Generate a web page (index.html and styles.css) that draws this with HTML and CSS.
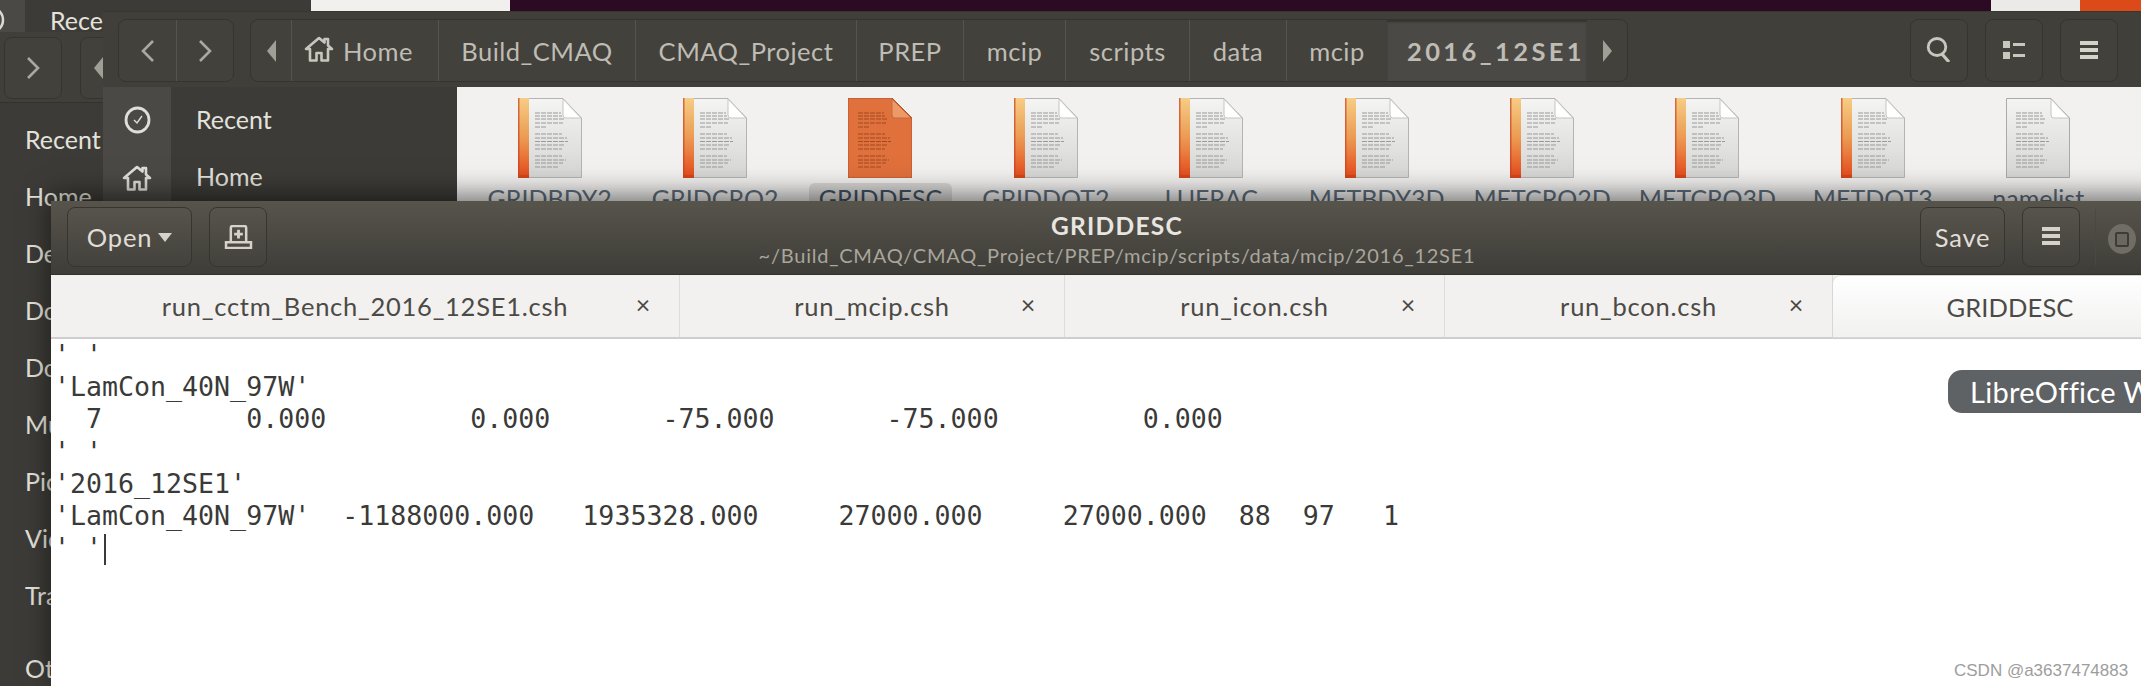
FILE: index.html
```html
<!DOCTYPE html>
<html lang="en">
<head>
<meta charset="utf-8">
<title>GRIDDESC</title>
<link rel="stylesheet" href="styles.css">
</head>
<body>
<svg class="defs" width="0" height="0" aria-hidden="true">
  <defs>
    <linearGradient id="band" x1="0" y1="0" x2="0" y2="1">
      <stop offset="0" stop-color="#f6cd85"/><stop offset=".5" stop-color="#eb9a52"/><stop offset="1" stop-color="#e5491c"/>
    </linearGradient>
    <linearGradient id="paper" x1="0" y1="0" x2="0" y2="1">
      <stop offset="0" stop-color="#f4f4f3"/><stop offset="1" stop-color="#d6d6d5"/>
    </linearGradient>
    <symbol id="lines" viewBox="0 0 64 80">
      <path d="M17 15h26M17 18h27M17 21h30M17 25h28M17 29h11M17 36h27M17 40h32M17 43.500h33M17 47h30M17 51h27M17 58h27M17 62h31M17 65h28M17 69h24" stroke="currentColor" stroke-width="1.100" stroke-dasharray="5 1" fill="none"/>
    </symbol>
    <symbol id="doc" viewBox="0 0 64 80">
      <path d="M.5.500H45L63.500 20V79.500H.5Z" fill="url(#paper)" stroke="#b4b4b3"/>
      <rect x="0" y="0" width="11" height="80" fill="url(#band)"/>
      <path d="M0 0h1.500V80H0zM0 77h11v3H0z" fill="#c9431c" opacity=".7"/>
      <path d="M45 1V17a3 3 0 0 0 3 3H63Z" fill="#fff" stroke="#c4c4c3"/>
      <use href="#lines" width="64" height="80"/>
    </symbol>
    <symbol id="doc-plain" viewBox="0 0 64 80">
      <path d="M.5.500H45L63.500 20V79.500H.5Z" fill="url(#paper)" stroke="#a9a9a8"/>
      <path d="M45 1V17a3 3 0 0 0 3 3H63Z" fill="#fff" stroke="#c4c4c3"/>
      <use href="#lines" x="-7" width="64" height="80"/>
    </symbol>
    <symbol id="doc-selected" viewBox="0 0 64 80">
      <path d="M0 0H44L64 20V80H0Z" fill="#e0703c" stroke="#b4532a"/>
      <path d="M44 1V17a3 3 0 0 0 3 3H63Z" fill="#ee9a66" stroke="#c56a3e"/>
      <use href="#lines" x="-7" width="64" height="80"/>
    </symbol>
    <symbol id="home" viewBox="0 0 30 26">
      <path d="M15 2 2 13h4v11.500h6.500V17h5v7.500H24V13h4l-4-3.400V3h-3.500v3.600Z" fill="none" stroke="currentColor" stroke-width="2.600" stroke-linejoin="round"/>
    </symbol>
    <symbol id="left" viewBox="0 0 16 24"><path d="M13 2 3 12l10 10" fill="none" stroke="currentColor" stroke-width="2.600"/></symbol>
    <symbol id="right" viewBox="0 0 16 24"><path d="m3 2 10 10L3 22" fill="none" stroke="currentColor" stroke-width="2.600"/></symbol>
    <symbol id="burger" viewBox="0 0 18 18"><path d="M0 0h18v4H0zM0 7h18v4H0zM0 14h18v4H0z" fill="currentColor"/></symbol>
  </defs>
</svg>

<div class="desktop">
  <div class="topstrip">
    <span class="seg seg-dark"></span><span class="seg seg-white"></span><span class="seg seg-purple"></span><span class="seg seg-light"></span><span class="seg seg-orange"></span>
  </div>

  <section class="win win-back">
    <div class="back-top">
      <span class="back-tile"><svg class="back-clock" viewBox="0 0 26 32"><ellipse cx="13" cy="16" rx="11" ry="12" fill="none" stroke="currentColor" stroke-width="2.500"/></svg></span>
      <span class="back-title">Recent</span>
    </div>
    <div class="back-bar">
      <span class="btn back-next"><svg class="chev"><use href="#right"/></svg></span>
      <span class="btn back-path"><i class="tri tri-left"></i></span>
    </div>
    <ul class="back-side">
      <li>Recent</li><li>Home</li><li>Desktop</li><li>Documents</li><li>Downloads</li><li>Music</li><li>Pictures</li><li>Videos</li><li>Trash</li><li class="gap">Other</li>
    </ul>
  </section>

  <section class="win win-files">
    <header class="files-bar">
      <div class="btn nav">
        <span class="nav-cell"><svg class="chev"><use href="#left"/></svg></span>
        <span class="nav-cell"><svg class="chev"><use href="#right"/></svg></span>
      </div>
      <div class="btn crumbs">
        <span class="crumb"><i class="tri tri-left"></i></span>
        <span class="crumb crumb-home"><svg class="home-ico"><use href="#home"/></svg>Home</span>
        <span class="crumb">Build_CMAQ</span>
        <span class="crumb">CMAQ_Project</span>
        <span class="crumb">PREP</span>
        <span class="crumb">mcip</span>
        <span class="crumb">scripts</span>
        <span class="crumb">data</span>
        <span class="crumb">mcip</span>
        <span class="crumb crumb-on">2016_12SE1</span>
        <span class="crumb"><i class="tri tri-right"></i></span>
      </div>
      <div class="tools">
        <span class="btn tool">
          <svg class="ico-search" viewBox="0 0 26 25"><ellipse cx="11" cy="10" rx="8.800" ry="8.500" fill="none" stroke="currentColor" stroke-width="2.800"/><path d="m16 17 7 8" stroke="currentColor" stroke-width="3.200"/></svg>
        </span>
        <span class="btn tool">
          <svg class="ico-list" viewBox="0 0 22 18"><path d="M0 0h7v7H0zM0 11h7v7H0zM10 2h12v3H10zM10 13h12v3H10z" fill="currentColor"/></svg>
        </span>
        <span class="btn tool"><svg class="ico-burger"><use href="#burger"/></svg></span>
      </div>
    </header>
    <div class="files-body">
      <aside class="side">
        <div class="side-icons">
          <svg class="side-clock" viewBox="0 0 27 28"><ellipse cx="13.500" cy="14" rx="11.500" ry="12" fill="none" stroke="currentColor" stroke-width="2.800"/><path d="m10 14 3 3 5-7" fill="none" stroke="currentColor" stroke-width="1.400"/></svg>
          <svg class="side-home"><use href="#home"/></svg>
        </div>
        <ul class="side-list"><li>Recent</li><li>Home</li></ul>
      </aside>
      <div class="grid">
        <figure class="file"><svg class="doc"><use href="#doc"/></svg><figcaption>GRIDBDY2</figcaption></figure>
        <figure class="file"><svg class="doc"><use href="#doc"/></svg><figcaption>GRIDCRO2</figcaption></figure>
        <figure class="file file-on"><svg class="doc"><use href="#doc-selected"/></svg><figcaption>GRIDDESC</figcaption></figure>
        <figure class="file"><svg class="doc"><use href="#doc"/></svg><figcaption>GRIDDOT2</figcaption></figure>
        <figure class="file"><svg class="doc"><use href="#doc"/></svg><figcaption>LUFRAC</figcaption></figure>
        <figure class="file"><svg class="doc"><use href="#doc"/></svg><figcaption>METBDY3D</figcaption></figure>
        <figure class="file"><svg class="doc"><use href="#doc"/></svg><figcaption>METCRO2D</figcaption></figure>
        <figure class="file"><svg class="doc"><use href="#doc"/></svg><figcaption>METCRO3D</figcaption></figure>
        <figure class="file"><svg class="doc"><use href="#doc"/></svg><figcaption>METDOT3</figcaption></figure>
        <figure class="file"><svg class="doc"><use href="#doc-plain"/></svg><figcaption>namelist</figcaption></figure>
      </div>
    </div>
  </section>

  <section class="win win-edit">
    <header class="edit-bar">
      <div class="edit-left">
        <span class="btn open">Open<i class="tri tri-down"></i></span>
        <span class="btn newtab">
          <svg class="ico-new" viewBox="0 0 30 25"><path d="M7 17V3a2 2 0 0 1 2-2h12a2 2 0 0 1 2 2v14M2 24v-6h26v6Z" fill="none" stroke="currentColor" stroke-width="2.600"/><path d="M15 5v9M10.500 9.500h9" stroke="currentColor" stroke-width="3"/></svg>
        </span>
      </div>
      <div class="edit-title">
        <h1>GRIDDESC</h1>
        <p>~/Build_CMAQ/CMAQ_Project/PREP/mcip/scripts/data/mcip/2016_12SE1</p>
      </div>
      <div class="edit-right">
        <span class="btn save">Save</span>
        <span class="btn tool-edit"><svg class="ico-burger"><use href="#burger"/></svg></span>
        <span class="edit-sep"></span>
        <span class="close-ball"><i></i></span>
      </div>
    </header>
    <nav class="tabs">
      <div class="tab"><span></span><span class="tab-name">run_cctm_Bench_2016_12SE1.csh</span><span class="tab-x">×</span></div>
      <div class="tab"><span></span><span class="tab-name">run_mcip.csh</span><span class="tab-x">×</span></div>
      <div class="tab"><span></span><span class="tab-name">run_icon.csh</span><span class="tab-x">×</span></div>
      <div class="tab"><span></span><span class="tab-name">run_bcon.csh</span><span class="tab-x">×</span></div>
      <div class="tab tab-on"><span></span><span class="tab-name">GRIDDESC</span><span class="tab-x">×</span></div>
    </nav>
    <pre class="code">' '
'LamCon_40N_97W'
  7         0.000         0.000       -75.000       -75.000         0.000
' '
'2016_12SE1'
'LamCon_40N_97W'  -1188000.000   1935328.000     27000.000     27000.000  88  97   1
' '<span class="caret"></span></pre>
  </section>

  <div class="tip">LibreOffice Writer</div>
  <div class="mark">CSDN @a3637474883</div>
</div>
</body>
</html>
```
FILE: styles.css
```css
* { box-sizing: border-box; }
html, body { margin: 0; padding: 0; background: #fff; }
.defs { position: absolute; }
ul { list-style: none; margin: 0; padding: 0; }
figure, h1, p, pre { margin: 0; }
i { font-style: normal; }

.desktop {
  position: relative;
  width: 2141px;
  height: 686px;
  overflow: hidden;
  font-family: Lato, "Open Sans", sans-serif;
  background: #fff;
}

.topstrip { display: flex; height: 11px; }
.seg { display: block; height: 100%; }
.seg-dark { width: 311px; background: #3c3b37; }
.seg-white { width: 199px; background: #f1f0ee; }
.seg-purple { width: 1481px; background: #2c0a24; }
.seg-light { width: 89px; background: #ebeae8; }
.seg-orange { width: 61px; background: #dc4a1a; }

.win { position: absolute; }

.btn {
  display: flex;
  align-items: center;
  justify-content: center;
  border: 1px solid #35342f;
  border-radius: 8px;
  color: #bfbcb4;
  background: rgba(255, 255, 255, .012);
}

.chev { width: 16px; height: 24px; color: #aba89f; }
.tri { display: block; width: 0; height: 0; }
.tri-left { border: 11px solid transparent; border-left: 0; border-right: 9px solid #a19e95; }
.tri-right { border: 11px solid transparent; border-right: 0; border-left: 9px solid #a19e95; }
.tri-down { border: 7px solid transparent; border-bottom: 0; border-top: 9px solid #d5d2ca; margin-left: 6px; margin-top: 1px; }

/* back window */
.win-back { left: 0; top: 0; width: 311px; height: 686px; background: #3c3b37; color: #e4e2dc; font-size: 25px; }
.back-top { display: flex; align-items: center; height: 32px; padding-top: 8px; background: #3c3b37; }
.back-tile { display: flex; justify-content: flex-start; width: 25px; height: 32px; margin-top: -8px; background: #4a4945; overflow: hidden; }
.back-clock { flex: none; width: 26px; height: 32px; margin-left: -21px; margin-top: 4px; color: #dcdad3; }
.back-title { margin-left: 25px; }
.back-bar { display: flex; height: 71px; padding: 5px 0 3px 4px; gap: 18px; background: #403f3a; border-bottom: 1px solid #33322e; }
.back-next { width: 58px; }
.back-path { width: 100px; justify-content: flex-start; padding-left: 13px; }
.back-side { padding-left: 25px; padding-top: 8px; }
.back-side li { height: 57px; line-height: 57px; }
.back-side .gap { margin-top: 16px; }

/* file manager */
.win-files { left: 103px; top: 11px; width: 2038px; height: 260px; background: #3c3b37; }
.files-bar { display: flex; align-items: flex-start; height: 76px; padding: 7px 0 0 15px; background: #403f3a; border-top: 1px solid #38372f; }
.nav { display: grid; grid-template-columns: 57px 57px; width: 116px; height: 63px; }
.nav-cell { display: flex; align-items: center; justify-content: center; height: 100%; }
.nav-cell + .nav-cell { border-left: 1px solid #55544e; }
.crumbs {
  display: grid;
  grid-template-columns: 40px 147px 197px 221px 107px 102px 124px 97px 101px 200px 40px;
  width: 1378px;
  height: 63px;
  margin-left: 16px;
  font-size: 25.500px;
  letter-spacing: .5px;
}
.crumb { display: flex; align-items: center; justify-content: center; height: 100%; border-left: 1px solid #55544e; }
.crumb:first-child { border-left: 0; }
.crumb-home { gap: 9px; justify-content: flex-start; padding-left: 12px; }
.crumb-on { padding-left: 18px; background: #4a4945; font-weight: 700; letter-spacing: 3.400px; border-left: 0; box-shadow: inset 0 2px 2px #35342f; }
.crumb-on + .crumb { border-left: 0; }
.home-ico { width: 30px; height: 26px; margin-top: -4px; color: #c9c6be; }
.tools { display: flex; gap: 17px; margin-left: 282px; }
.tool { width: 58px; height: 63px; color: #c9c6be; }
.ico-search { width: 26px; height: 25px; margin-top: -2px; }
.ico-list { width: 22px; height: 18px; margin-top: -2px; }
.ico-burger { width: 18px; height: 18px; margin-top: -2px; color: #d5d2ca; }
.files-body { display: flex; height: 184px; }
.side { display: flex; width: 354px; color: #e4e2dc; font-size: 25px; }
.side-icons { display: flex; flex-direction: column; align-items: center; gap: 31px; width: 68px; padding-top: 19px; background: #4a4945; color: #e0ded8; }
.side-clock { width: 27px; height: 28px; }
.side-home { width: 30px; height: 26px; }
.side-list { padding-left: 25px; }
.side-list li { height: 57px; line-height: 65px; }
.grid { display: flex; flex: 1; padding: 11px 0 0 10px; background: #f2f1f0; }
.file { display: flex; flex-direction: column; align-items: center; flex: none; width: 165.400px; color: #5d6d7a; font-size: 25px; }
.doc { width: 64px; height: 80px; margin-bottom: 5px; color: #9a9a99; }
.file figcaption { padding: 0 10px; border-radius: 6px; white-space: nowrap; }
.file-on .doc { color: #a04a22; }
.file-on figcaption { background: #d9d8d5; color: #3f5165; }

/* editor */
.win-edit {
  left: 51px;
  top: 201px;
  width: 2136px;
  height: 485px;
  background: #fff;
  box-shadow: 0 -6px 26px rgba(0, 0, 0, .55);
}
.edit-bar {
  display: grid;
  grid-template-columns: 1fr auto 1fr;
  height: 74px;
  padding: 6px 51px 0 16px;
  background: linear-gradient(#57544c, #3f3d38);
  border-bottom: 1px solid #33322e;
}
.edit-left { display: flex; gap: 17px; }
.edit-bar .btn { height: 60px; color: #e0ded8; font-size: 25.500px; letter-spacing: .8px; border-color: #37352f; }
.open { width: 125px; }
.newtab { width: 58px; }
.ico-new { width: 29px; height: 24px; color: #d5d2ca; }
.edit-title { width: 820px; margin-left: 31px; text-align: center; }
.edit-title h1 { margin-top: 2px; font-size: 24.500px; line-height: 34px; letter-spacing: 1.300px; color: #e8e6e0; }
.edit-title p { font-size: 20px; line-height: 24px; color: #a9a69d; letter-spacing: .78px; white-space: nowrap; }
.edit-right { display: flex; justify-content: flex-end; gap: 17px; }
.save { width: 85px; }
.tool-edit { width: 58px; }
.edit-sep { width: 1px; height: 56px; margin: 2px 0 0 -2px; background: #4a4843; }
.close-ball { display: flex; align-items: center; justify-content: center; width: 28px; height: 30px; margin: 17px 0 0 -5px; border-radius: 50%; background: #706d66; }
.close-ball i { width: 14px; height: 15px; border: 2px solid #3d3b36; background: #6a675f; border-radius: 2px; }

.tabs { display: grid; grid-template-columns: 629px 385px 380px 388px 354px; height: 64px; background: #f2f1f0; border-bottom: 2px solid #cfcecc; }
.tab { display: grid; grid-template-columns: 1fr auto 1fr; align-items: center; padding: 0 28px; border-right: 1px solid #dddcda; font-size: 25.500px; letter-spacing: .75px; color: #4c4a45; }
.tab-name { white-space: nowrap; }
.tab-x { justify-self: end; font-size: 25px; line-height: 1; margin-top: -4px; color: #4c4a45; }
.tab-on { margin-top: 1px; border-right: 0; border-radius: 8px 8px 0 0; letter-spacing: .1px; background: linear-gradient(#fff, #f1f1f0); box-shadow: 0 0 0 1px #d8d7d5; }

.code {
  padding: 0 0 0 3px;
  font-family: "DejaVu Sans Mono", "Liberation Mono", monospace;
  font-size: 26.600px;
  line-height: 32.200px;
  color: #3a3a38;
}
.caret { display: inline-block; width: 1.500px; height: 31px; margin-left: 2px; vertical-align: -8px; background: #3a3a38; }

.tip {
  position: absolute;
  left: 1948px;
  top: 370px;
  width: 320px;
  height: 43px;
  padding-left: 22px;
  border-radius: 14px;
  background: #5f6264;
  color: #fff;
  font-size: 29px;
  line-height: 43px;
  letter-spacing: .3px;
  white-space: nowrap;
}
.mark {
  position: absolute;
  left: 1954px;
  top: 661px;
  font-family: "Liberation Sans", Arial, sans-serif;
  font-size: 17px;
  line-height: 20px;
  color: #9d9d9d;
  white-space: nowrap;
}
```
